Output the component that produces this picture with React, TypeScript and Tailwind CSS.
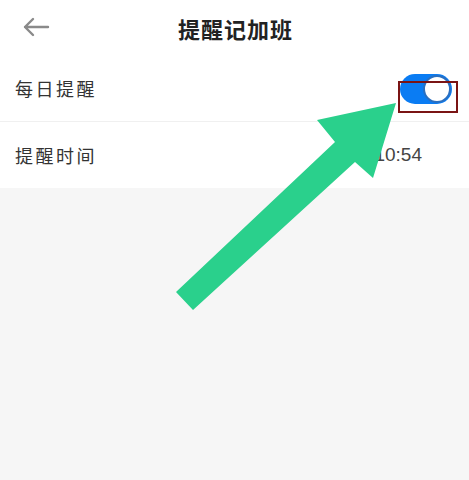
import React from 'react';

export default function App() {
  return (
    <div className="relative flex min-h-screen w-full flex-col bg-[#f6f6f6] font-['Noto_Sans_CJK_SC',sans-serif] text-[#333]">
      <div className="relative flex h-[56px] items-center justify-center bg-white">
        <svg className="absolute left-[22px] top-[16px]" width="28" height="22" viewBox="0 0 28 22" fill="none">
          <path d="M26 11H3M11 3L3 11l8 8" stroke="#8a8a8a" strokeWidth="2.4" strokeLinecap="round" strokeLinejoin="round" />
        </svg>
        <h1 className="pl-[2px] text-[22px] font-bold tracking-[1px] text-[#222]">提醒记加班</h1>
      </div>

      <div className="bg-white">
        <div className="flex h-[66px] items-center justify-between border-b border-[#f0f0f0] pl-[15px] pr-[17px]">
          <span className="text-[18px] tracking-[2.5px]">每日提醒</span>
          <div className="relative flex h-[30px] w-[52px] items-center justify-end rounded-full bg-[#0a7cf3] pr-[1px]">
            <div className="h-[28px] w-[28px] rounded-full border-2 border-[#2a6fc0] bg-white" />
          </div>
        </div>
        <div className="flex h-[66px] items-center justify-between pl-[15px] pr-[47px]">
          <span className="text-[18px] tracking-[2.5px]">提醒时间</span>
          <span className="font-['Liberation_Sans',sans-serif] text-[19px] text-[#444]">10:54</span>
        </div>
      </div>

      <div className="flex-1" />

      <div className="pointer-events-none absolute left-[398px] top-[81px] h-[32px] w-[60px] border-2 border-[#7a1414]" />

      <svg className="pointer-events-none absolute left-0 top-0" width="469" height="480" viewBox="0 0 469 480">
        <polygon
          points="396,103 317,120 335,142 176,292 193,310 355,162 373,178"
          fill="#2ad08c"
        />
      </svg>
    </div>
  );
}
